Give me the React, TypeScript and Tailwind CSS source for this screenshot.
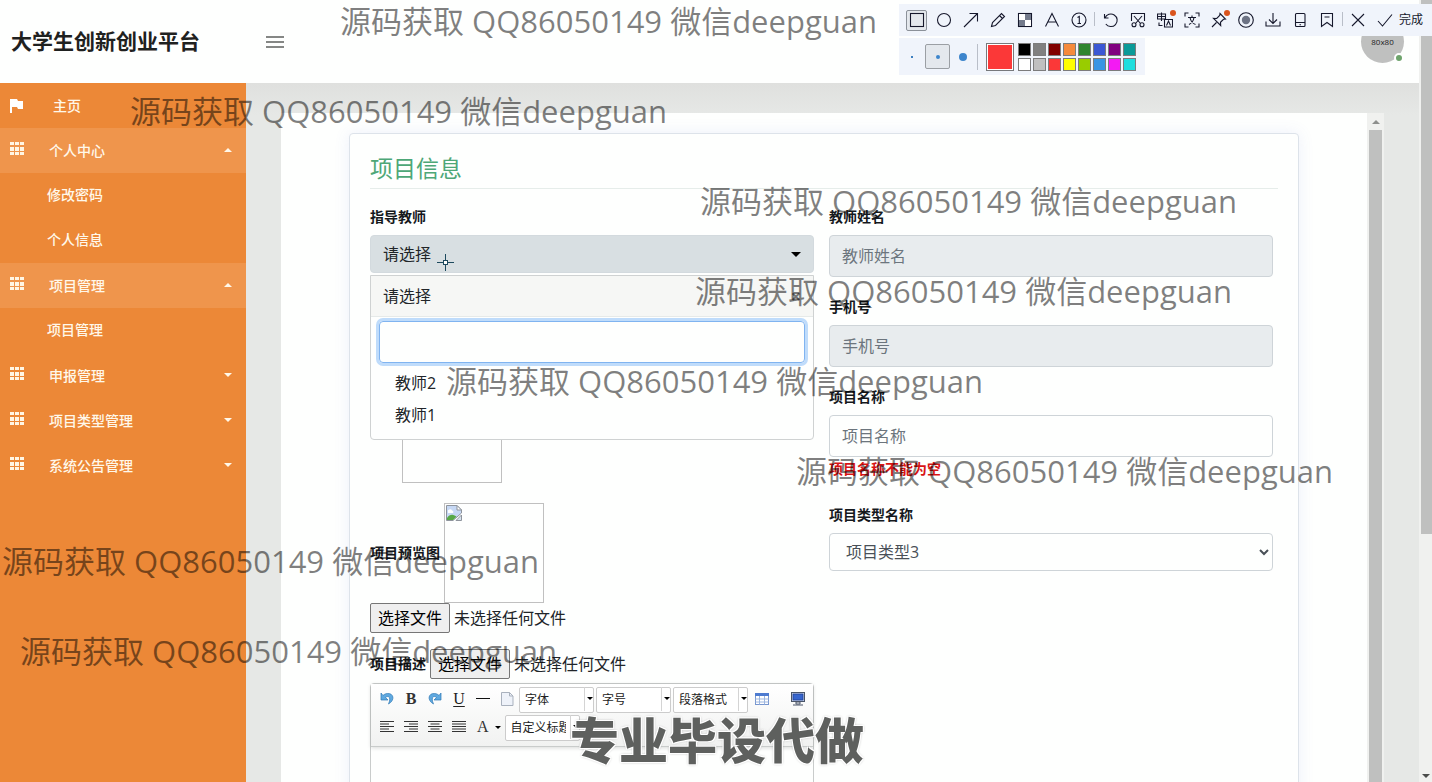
import { useState, type ReactNode } from "react";
import clsx from "clsx";

const WATERMARK = "源码获取 QQ86050149 微信deepguan";

// free-floating marks over the whole window
const watermarks = [
  "left-[340px] top-0",
  "left-[130px] top-[90px]",
  "left-[700px] top-[180px]",
  "left-[695px] top-[270px]",
  "left-[446px] top-[360px]",
  "left-[796px] top-[450px]",
  "left-[2px] top-[540px]",
  "left-[20px] top-[630px]",
];

const menu = [
  { name: "个人中心", open: true, children: ["修改密码", "个人信息"] },
  { name: "项目管理", open: true, children: ["项目管理"] },
  { name: "申报管理", open: false, children: [] },
  { name: "项目类型管理", open: false, children: [] },
  { name: "系统公告管理", open: false, children: [] },
];

const swatches = [
  "bg-black", "bg-[#808080]", "bg-[#800000]", "bg-[#f68a3c]", "bg-[#2f852f]", "bg-[#3a57d4]", "bg-[#800080]", "bg-[#0a9a98]",
  "bg-white", "bg-[#c0c0c0]", "bg-[#fb3838]", "bg-[#ffff00]", "bg-[#99cc00]", "bg-[#3894e4]", "bg-[#f31af3]", "bg-[#1edede]",
];

function Caret({ up = false, className }: { up?: boolean; className?: string }) {
  return (
    <svg viewBox="0 0 8 4" className={clsx("w-2 h-1 shrink-0", className)} fill="currentColor" aria-hidden="true">
      <path d={up ? "M0 4L4 0L8 4Z" : "M0 0L4 4L8 0Z"} />
    </svg>
  );
}

function GridIcon() {
  return (
    <svg viewBox="0 0 14 13" className="w-[14px] h-[13px] mb-1" fill="#fff6e4" aria-hidden="true">
      {[0, 5, 10].map((x) => [0, 5, 10].map((y) => <rect key={`${x}-${y}`} x={x} y={y} width="4" height={y === 5 ? 4 : 3} />))}
    </svg>
  );
}

function Tool({ label, active, badge, children }: { label: string; active?: boolean; badge?: boolean; children: ReactNode }) {
  return (
    <button aria-label={label} className="relative w-[27px] h-8 flex items-center justify-center">
      <span className={clsx("w-[21px] h-[21px] flex items-center justify-center rounded-xs", active && "border border-[#8b9199] bg-[#e4e8ed]")}>
        <svg viewBox="0 0 16 16" className="w-4 h-4 shrink-0" fill="none" stroke="#16182c" strokeWidth="1.1" aria-hidden="true">{children}</svg>
      </span>
      {badge && <span className="absolute right-[2px] top-[6px] w-1.5 h-1.5 rounded-full bg-[#d9541e]" />}
    </button>
  );
}

function CaptureToolbar() {
  return (
    <div className="absolute right-0 top-1 z-30 flex flex-col items-start gap-0.5 w-[533px]">
      <div className="w-full h-8 bg-[#f0f4fb] flex items-center pl-1">
        <Tool label="矩形" active><rect x="1.5" y="1.5" width="13" height="13" /></Tool>
        <Tool label="椭圆"><circle cx="8" cy="8" r="6.5" /></Tool>
        <Tool label="箭头"><path d="M1 15L14.5 1.5M6.5 1.5h8v8" /></Tool>
        <Tool label="画笔"><path d="M1.500 14.500l1-4L11.500 1.500l3 3L5.500 13.500zM9.500 3.500l3 3" /></Tool>
        <Tool label="马赛克">
          <rect x="1.5" y="1.5" width="13" height="13" />
          <path d="M8 8h6v6H8zM2 2h6v6H2z" fill="#fff" stroke="none" />
          <path d="M8 2h6v6H8zM2 8h6v6H2z" fill="#747b8c" stroke="none" />
        </Tool>
        <Tool label="文字"><path d="M1.5 14.5L8 1.5l6.500 13M4 10h8" /></Tool>
        <Tool label="序号"><circle cx="8" cy="8" r="7" /><path d="M6.500 5.500L8.300 4.500V11.500M6.500 11.500h3.500" /></Tool>
        <span className="w-[5px] h-4 flex justify-center"><span className="w-px h-[14px] bg-[#b9bec8]" /></span>
        <Tool label="撤销"><path d="M1.500 2v4h4M2 6a6.300 6.300 0 1 1 .8 6" /></Tool>
        <Tool label="裁剪">
          <path d="M1.500 9V1.500h13V9M4 4l6.500 7.500M12 4L5.500 11.500" />
          <circle cx="4" cy="12.800" r="2" /><circle cx="12" cy="12.800" r="2" />
        </Tool>
        <Tool label="翻译" badge>
          <path d="M.5 2h8v5h-8zM4.500 0.500v8.500M.5 4.500h8M7.500 7.500h8v7.500h-8zM9.500 13.500l2-4.500 2 4.500M2 10.500v3h3.500" />
        </Tool>
        <Tool label="识别文字">
          <path d="M1 4.500V1h3.500M11.500 1H15v3.500M15 11.500V15h-3.500M4.500 15H1v-3.500M4 5.500h8M8 3.500v2M5 12.500c3-1.500 4.500-4 5-7M6 5.500c.6 3 2.500 6 5.500 7" />
        </Tool>
        <Tool label="钉住" badge><path d="M9 1.500l5.500 5.500-2 .3-3 3 .2 3.200-7.200-7.200 3.200.2 3-3zM5.500 10.500L1 15" /></Tool>
        <Tool label="录制"><circle cx="8" cy="8" r="7.300" /><circle cx="8" cy="8" r="4.200" fill="#6d7384" stroke="none" /></Tool>
        <Tool label="保存"><path d="M8 1v10M4 7.500l4 4 4-4M1 9.500v4.500h14V9.500" /></Tool>
        <Tool label="发送到手机"><rect x="3.500" y="1.500" width="9.500" height="13" rx="1" /><path d="M3.500 10.500H13M7.500 12.800h1.500" /></Tool>
        <Tool label="收藏"><path d="M2.500 1.500h11v13L8 10.500 2.500 14.500zM5.500 5h5" /></Tool>
        <span className="w-1 h-4 flex justify-center"><span className="w-px h-[14px] bg-[#b9bec8]" /></span>
        <Tool label="关闭"><path d="M2 2l12 12M14 2L2 14" /></Tool>
        <button className="flex items-center text-xs text-[#16182c]">
          <svg viewBox="0 0 16 16" className="w-4 h-4 mx-1.5" fill="none" stroke="#16182c" strokeWidth="1.1" aria-hidden="true"><path d="M1 9l4.500 5L15 2.500" /></svg>
          完成
        </button>
      </div>
      <div className="h-[37px] w-[246px] bg-[#f0f4fb] flex items-center pl-px">
        <button aria-label="细" className="w-6 h-6 flex items-center justify-center"><span className="w-0.5 h-0.5 bg-[#3d7fc0]" /></button>
        <button aria-label="中" className="w-[25px] h-[25px] mx-px border border-[#9b9fa4] rounded-xs bg-[#e4e8ed] flex items-center justify-center"><span className="w-1 h-1 rounded-full bg-[#3d85cc]" /></button>
        <button aria-label="粗" className="w-6 h-6 flex items-center justify-center"><span className="w-2 h-2 rounded-full bg-[#3d85cc]" /></button>
        <span className="w-px h-[26px] ml-0.5 mr-2 bg-[#b9bec8]" />
        <span className="w-7 h-7 border border-[#77797c] bg-white p-px"><span className="block w-full h-full bg-[#fb3838]" /></span>
        <div className="ml-1 grid grid-cols-8 gap-0.5">
          {swatches.map((c) => <button key={c} aria-label={c} className={clsx("w-[13px] h-[13px] border border-[#7c7c7c]", c)} />)}
        </div>
      </div>
    </div>
  );
}

function Sidebar() {
  return (
    <aside className="w-[246px] shrink-0 bg-[#ec8837] text-sm font-medium text-[#fff8ea]">
      <a href="#home" className="h-[45px] flex items-center pl-[10px]">
        <svg viewBox="0 0 13 14" className="w-[13px] h-[14px] mr-[30px]" fill="#fff" aria-hidden="true"><path d="M0 0h7l1 2h5v8H8L7 8H2v6H0z" /></svg>
        主页
      </a>
      {menu.map((m) => (
        <div key={m.name}>
          <button className={clsx("w-full h-[45px] flex items-center pl-[10px] pr-[14px]", m.open && "bg-[#ef954c]")}>
            <GridIcon />
            <span className="ml-[25px]">{m.name}</span>
            <Caret up={m.open} className="ml-auto mb-0.5" />
          </button>
          {m.children.map((c) => <a key={c} href="#sub" className="h-[45px] flex items-center pl-[47px] pb-0.5">{c}</a>)}
        </div>
      ))}
    </aside>
  );
}

const labelCls = "text-sm leading-5 font-bold text-[#15191d]";
const inputCls = "block w-full h-[42px] px-3 rounded border border-[#ced4d8] text-base text-[#495057] placeholder-[#6c757d] outline-none";

function Field({ id, label, disabled }: { id: string; label: string; disabled?: boolean }) {
  return (
    <div>
      <label htmlFor={id} className={clsx("block mb-2", labelCls)}>{label}</label>
      <input id={id} placeholder={label} readOnly={disabled} className={clsx(inputCls, disabled ? "bg-[#e8ecee]" : "bg-[#fefffe]")} />
    </div>
  );
}

function FilePicker() {
  return (
    <div className="flex items-center gap-1 text-base leading-6 text-[#212529]">
      <button className="h-[30px] px-[7px] border border-[#767676] rounded-xs bg-[#efefef] text-black">选择文件</button>
      <span>未选择任何文件</span>
    </div>
  );
}

function BrokenImage() {
  return (
    <div role="img" aria-label="预览图" className="w-[100px] h-[100px] border border-[#c0c0c0] p-px">
      <svg viewBox="0 0 16 16" className="w-4 h-4" aria-hidden="true">
        <path d="M.5.500h10.500l4.500 4.500v3L7 15.500H.5z" fill="#c6d8f4" stroke="#8e949c" />
        <path d="M11 .5v4.500h4.500z" fill="#fff" stroke="#8e949c" />
        <path d="M2 6.500a2 1.500 0 0 1 4-1 1.500 1.500 0 0 1 1 2.500H2z" fill="#fff" />
        <path d="M1 15v-2c2-3 5-4 7.500-2.500l2 1L7 15z" fill="#58a947" />
        <path d="M15.500 10v5.500H10z" fill="#d6e2ee" stroke="#8e949c" />
      </svg>
    </div>
  );
}

function EditorButton({ label, children }: { label: string; children: ReactNode }) {
  return (
    <button aria-label={label} className="w-6 h-7 shrink-0 flex items-center justify-center">
      <svg viewBox="0 0 16 16" className="w-4 h-4" fill="none" stroke="#333" aria-hidden="true">{children}</svg>
    </button>
  );
}

function EditorSelect({ label }: { label: string }) {
  return (
    <div className="relative w-[75px] shrink-0">
      <select aria-label={label} className="appearance-none w-full h-[26px] pl-[5px] pr-[13px] border border-[#ccc] rounded-xs bg-white text-xs text-[#222]">
        <option>{label}</option>
      </select>
      <span className="pointer-events-none absolute right-0 top-px h-6 w-[10px] border-l border-[#d4d4d4] flex items-center pl-0.5">
        <Caret className="text-black w-[6px] h-[3px]" />
      </span>
    </div>
  );
}

function Editor() {
  return (
    <div className="mt-1 border border-[#c9cccb] rounded">
      <div className="pl-1 pt-px pb-[5px] border-b border-[#c9cccb] bg-linear-to-b from-white to-[#f1f2f1] shadow-[0_1px_4px_rgba(0,0,0,0.15)]">
        <div className="flex items-center">
          <EditorButton label="撤销"><path d="M2 2v7h7L6.500 6.500c3-2.500 6 0 3 6.500 7-4 5-11-1-10.500-2 0-3.500 1-4.500 2z" fill="#5fa9e0" stroke="#2f78b5" strokeWidth=".7" /></EditorButton>
          <button className="w-6 h-7 shrink-0 font-['Liberation_Serif',serif] text-base font-bold text-[#333]">B</button>
          <EditorButton label="重做"><path d="M14 2v7H7l2.500-2.500c-3-2.500-6 0-3 6.500-7-4-5-11 1-10.500 2 0 3.500 1 4.500 2z" fill="#5fa9e0" stroke="#2f78b5" strokeWidth=".7" /></EditorButton>
          <button className="w-6 h-7 shrink-0 font-['Liberation_Serif',serif] text-base text-[#222] underline underline-offset-2">U</button>
          <EditorButton label="分隔线"><path d="M1 7.500h14" stroke="#111" /></EditorButton>
          <EditorButton label="清空"><path d="M2.500 1.500h8l3.500 3.500v9.500H2.500z" fill="#eef2f9" stroke="#a9b1bd" /><path d="M10.500 1.500V5H14" stroke="#a9b1bd" /></EditorButton>
          <div className="flex shrink-0 gap-0.5 mr-0.5">
            <EditorSelect label="字体" />
            <EditorSelect label="字号" />
            <EditorSelect label="段落格式" />
          </div>
          <EditorButton label="表格">
            <rect x="1.500" y="2.500" width="13" height="11" fill="#fff" stroke="#7796cf" />
            <path d="M1 2h14v3H1z" fill="#4d7bd0" stroke="none" />
            <path d="M1.500 8h13M1.500 11h13M5.500 5v8.500M10.500 5v8.500" stroke="#9db6df" />
          </EditorButton>
          <span className="w-3" />
          <EditorButton label="全屏">
            <rect x="1.500" y="1.500" width="13" height="9" fill="#e3e8f2" stroke="#4a5568" />
            <rect x="3" y="3" width="10" height="6" fill="#3565cf" stroke="#24469b" />
            <path d="M6 11h4v2H6zM3 14h10" stroke="#4a5568" />
          </EditorButton>
        </div>
        <div className="flex items-center">
          <EditorButton label="左对齐"><path d="M1 2.500h14M1 5h9M1 7.500h14M1 10h9M1 12.500h14" /></EditorButton>
          <EditorButton label="右对齐"><path d="M1 2.500h14M6 5h9M1 7.500h14M6 10h9M1 12.500h14" /></EditorButton>
          <EditorButton label="居中"><path d="M1 2.500h14M3.500 5h9M1 7.500h14M3.500 10h9M1 12.500h14" /></EditorButton>
          <EditorButton label="两端对齐"><path d="M1 2.500h14M1 5h14M1 7.500h14M1 10h14M1 12.500h14" /></EditorButton>
          <button className="h-7 mr-1 pl-1.5 flex items-center gap-1.5 font-['Liberation_Serif',serif] text-base text-[#333]">
            A
            <Caret className="text-black w-[6px] h-[3px]" />
          </button>
          <EditorSelect label="自定义标题" />
        </div>
      </div>
      <textarea aria-label="项目描述" className="block w-full h-60 resize-none outline-none" />
    </div>
  );
}

function TeacherSelect() {
  const [query, setQuery] = useState("");
  return (
    <div className="relative text-base text-[#212529]">
      <button className="w-full h-[38px] px-3 rounded bg-[#d8dfe2] border border-[#d3dade] flex items-center justify-between">
        请选择
        <Caret className="text-black w-[10px] h-[5px]" />
      </button>
      <div className="absolute z-10 left-0 right-0 top-full mt-0.5 pb-2 border border-[#cfd2d2] rounded-b bg-[#fefffe]">
        <div className="h-[41px] px-3 flex items-center justify-between bg-[#f6f7f5] border-b border-[#e6eae9]">
          请选择
          <button aria-label="关闭" className="text-lg font-bold text-[#777]">×</button>
        </div>
        <div className="px-2 py-1">
          <input aria-label="搜索教师" value={query} onChange={(e) => setQuery(e.target.value)} className="block w-full h-[42px] px-3 rounded border border-[#80b4f0] ring-3 ring-[#bfdcfb] outline-none" />
        </div>
        {["教师2", "教师1"].map((t) => <button key={t} className="block w-full h-8 pl-6 text-left">{t}</button>)}
      </div>
    </div>
  );
}

function ProjectForm() {
  return (
    <section className="bg-[#fefffe] border border-[#dde3ea] rounded p-5 shadow-[0_0_16px_rgba(90,110,220,0.1)]">
      <h1 className="pb-1.5 text-[23px] leading-7 text-[#4da777] border-b border-[#e6edea]">项目信息</h1>
      <div className="mt-[18px] pr-[5px] grid grid-cols-2 gap-[15px]">
        <div>
          <div className={clsx("mb-2", labelCls)}>指导教师</div>
          <TeacherSelect />
          <div className="mt-[52px]">
            <input aria-label="教师工号" readOnly className={inputCls} />
          </div>
          <div className="mt-4 pl-8">
            <div className="w-[100px] h-[100px] border border-[#c0c0c0]" />
          </div>
          <div className="mt-5 flex items-center gap-1">
            <span className={labelCls}>项目预览图</span>
            <BrokenImage />
          </div>
          <FilePicker />
          <div className="mt-4 flex items-center gap-1">
            <span className={labelCls}>项目描述</span>
            <FilePicker />
          </div>
          <Editor />
        </div>
        <div className="flex flex-col gap-5">
          <Field id="teacher-name" label="教师姓名" disabled />
          <Field id="phone" label="手机号" disabled />
          <div>
            <Field id="project-name" label="项目名称" />
            <p className="mt-0.5 mb-1.5 text-sm leading-5 font-bold text-[#d81414]">项目名称不能为空</p>
          </div>
          <div>
            <label htmlFor="project-type" className={clsx("block mb-2", labelCls)}>项目类型名称</label>
            <select id="project-type" className="block w-full h-[38px] px-3 rounded border border-[#ced4d8] bg-[#fefffe] text-base text-[#495057]">
              <option>项目类型3</option>
            </select>
          </div>
        </div>
      </div>
    </section>
  );
}

export default function App() {
  return (
    <div className="relative h-screen overflow-hidden flex bg-[#fefffe] font-['Open_Sans','Noto_Sans_CJK_SC',sans-serif]">
      <div className="flex-1 min-w-0 flex flex-col">
        <header className="h-[83px] shrink-0 flex items-center pr-[15px]">
          <div className="w-[266px] pl-[11px] text-[21px] font-bold text-[#1f2120]">大学生创新创业平台</div>
          <button aria-label="菜单" className="flex flex-col gap-[3px]">
            <span className="w-[18px] h-0.5 bg-[#858785]" />
            <span className="w-[18px] h-0.5 bg-[#858785]" />
            <span className="w-[18px] h-0.5 bg-[#858785]" />
          </button>
          <div className="relative ml-auto w-[43px] h-[43px] rounded-full bg-[#bfc0bf] flex items-center justify-center text-[8px] font-medium text-[#222]">
            80x80
            <span className="absolute right-0 bottom-0 w-2.5 h-2.5 rounded-full border-2 border-white bg-[#6ea46c]" />
          </div>
        </header>
        <div className="flex-1 min-h-0 flex">
          <Sidebar />
          <main className="flex-1 min-w-0 px-[35px] pt-[30px] bg-[#e6e8e6] bg-[linear-gradient(to_bottom,#dfe0de,#e6e8e6_32px)]">
            <div className="h-full flex bg-[#fefffe]">
              <div className="flex-1 min-w-0 overflow-hidden px-[68px] pt-5">
                <ProjectForm />
              </div>
              <div className="w-[17px] shrink-0 flex flex-col items-center bg-[#f0f1ef]">
                <span className="h-[17px] flex items-center"><Caret up className="text-[#8d8f8d]" /></span>
                <span className="w-[13px] flex-1 bg-[#bfc0bf]" />
              </div>
            </div>
          </main>
        </div>
      </div>
      <div className="w-[13px] shrink-0 flex flex-col items-end bg-[#f0f1ef]">
        <span className="w-[11px] h-[534px] bg-[#bfc0bf]" />
        <span className="mt-auto mb-1 mr-0.5"><Caret className="text-[#4b4d4b]" /></span>
      </div>

      <svg viewBox="0 0 17 17" className="absolute z-20 left-[437px] top-[254px] w-[17px] h-[17px]" fill="none" stroke="#1d4a5e" aria-hidden="true">
        <path d="M8.500 0v6M8.500 11v6M0 8.500h6M11 8.500h6" />
        <rect x="6.500" y="6.500" width="4" height="4" fill="#fff" />
      </svg>
      <CaptureToolbar />
      {watermarks.map((pos) => (
        <div key={pos} className={clsx("pointer-events-none absolute z-20 whitespace-nowrap text-[31px] leading-[42px] text-black/50", pos)}>{WATERMARK}</div>
      ))}
      <div className="pointer-events-none absolute z-20 left-[570px] top-[712px] whitespace-nowrap text-[49px] leading-[56px] font-black text-[#5e605e] [text-shadow:1px_1px_0_#fff,-1px_-1px_0_#fff,1px_-1px_0_#fff,-1px_1px_0_#fff,0_0_3px_#888]">
        专业毕设代做
      </div>
    </div>
  );
}
